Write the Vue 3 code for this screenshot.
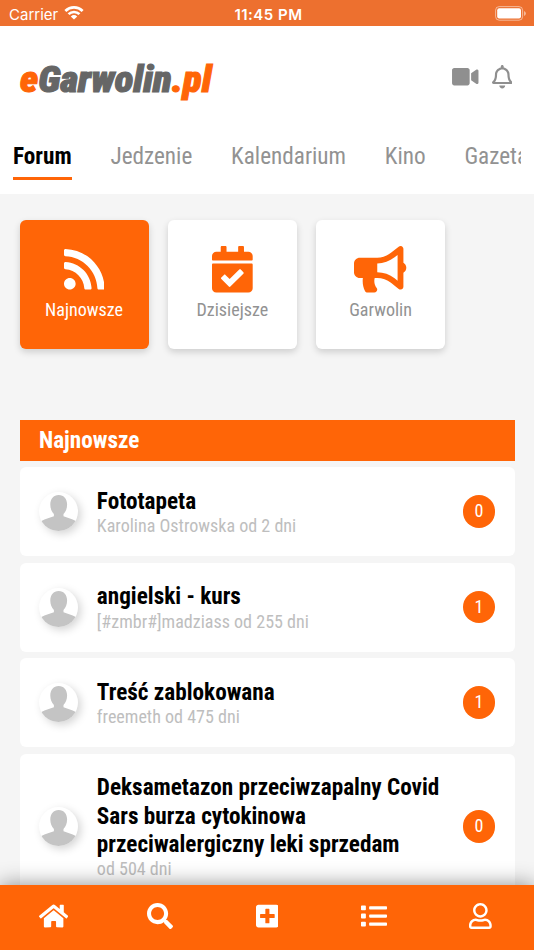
<template>
  <div class="app">

    <!-- ══ STATUS BAR ══ -->
    <div class="status-bar">
      <div class="carrier">
        <span>Carrier</span>
        <svg class="wifi" viewBox="0 0 20 15">
          <path d="M.4 4.900a14 14 0 0 1 19.200 0l-1.900 2a11.200 11.200 0 0 0-15.400 0z" />
          <path d="M3.600 8.200a9.300 9.300 0 0 1 12.800 0l-1.900 1.900a6.600 6.600 0 0 0-9 0z" />
          <path d="M6.800 11.400a4.700 4.700 0 0 1 6.400 0L10 14.600z" />
        </svg>
      </div>
      <div class="clock">11:45 PM</div>
      <div class="battery-wrap">
        <svg class="battery" viewBox="0 0 32 15">
          <rect x="0.6" y="0.6" width="27" height="13.6" rx="3.6" class="battery-shell" />
          <rect x="2.2" y="2.2" width="23.8" height="10.4" rx="2" />
          <path d="M29 5v5a2.600 2.600 0 0 0 0-5z" class="battery-tip" />
        </svg>
      </div>
    </div>

    <!-- ══ HEADER ══ -->
    <header class="header">
      <div class="brand-row">
        <svg class="logo" viewBox="0 0 210 60">
          <text x="1" y="41.500" textLength="191.500" lengthAdjust="spacingAndGlyphs" class="logo-text"><tspan class="accent">e</tspan>Garwolin<tspan class="accent">.pl</tspan></text>
        </svg>
        <div class="actions">
          <svg class="icon-video" viewBox="0 0 576 512"><path :d="icons.video" /></svg>
          <svg class="icon-bell" viewBox="0 0 448 512"><path :d="icons.bell" /></svg>
        </div>
      </div>
      <nav class="tabs">
        <a v-for="(tab, i) in tabs" :key="tab" class="tab" :class="{ active: i === 0 }">{{ tab }}</a>
      </nav>
    </header>

    <!-- ══ CONTENT ══ -->
    <main class="content">
      <div class="tiles">
        <div v-for="(tile, i) in tiles" :key="tile.label" class="tile" :class="{ active: i === 0 }">
          <svg class="tile-icon" :viewBox="`0 0 ${tile.width} 512`"><path :d="icons[tile.icon]" /></svg>
          <span class="tile-label">{{ tile.label }}</span>
        </div>
      </div>

      <h2 class="section-title">Najnowsze</h2>

      <div class="topics">
        <article v-for="topic in topics" :key="topic.title" class="topic">
          <div class="avatar">
            <svg viewBox="0 0 39 39">
              <path d="M19.700 3C14.500 3 11.300 7 11.300 12.500c0 4 1.300 7 3.600 9.500v2.200L9 26.200c-2.500.7-4.700 1.600-6.600 2.700L3 31a20 20 0 0 0 33 0l.8-2.100c-1.900-1.100-4.100-2-6.600-2.700l-5.700-2V22c2.300-2.500 3.600-5.500 3.600-9.500C28.100 7 24.900 3 19.700 3z" />
            </svg>
          </div>
          <div class="topic-body">
            <h3 class="topic-title">{{ topic.title }}</h3>
            <div class="topic-meta">{{ topic.meta }}</div>
          </div>
          <span class="count">{{ topic.count }}</span>
        </article>
      </div>
    </main>

    <!-- ══ BOTTOM BAR ══ -->
    <footer class="bottom-bar">
      <a v-for="item in menu" :key="item.icon" class="menu-item">
        <svg class="menu-icon" :viewBox="`0 0 ${item.width} 512`"><path :d="icons[item.icon]" /></svg>
      </a>
    </footer>
  </div>
</template>

<script setup>
const tabs = ['Forum', 'Jedzenie', 'Kalendarium', 'Kino', 'Gazeta']

const tiles = [
  { label: 'Najnowsze', icon: 'rss', width: 448 },
  { label: 'Dzisiejsze', icon: 'calendar', width: 448 },
  { label: 'Garwolin', icon: 'bullhorn', width: 576 },
]

const topics = [
  { title: 'Fototapeta', meta: 'Karolina Ostrowska od 2 dni', count: 0 },
  { title: 'angielski - kurs', meta: '[#zmbr#]madziass od 255 dni', count: 1 },
  { title: 'Treść zablokowana', meta: 'freemeth od 475 dni', count: 1 },
  { title: 'Deksametazon przeciwzapalny Covid Sars burza cytokinowa przeciwalergiczny leki sprzedam', meta: 'od 504 dni', count: 0 },
]

const menu = [
  { icon: 'home', width: 576 },
  { icon: 'search', width: 512 },
  { icon: 'plus', width: 448 },
  { icon: 'list', width: 512 },
  { icon: 'user', width: 448 },
]

const icons = {
  video: 'M336.2 64H47.8C21.4 64 0 85.4 0 111.8v288.4C0 426.6 21.4 448 47.8 448h288.4c26.4 0 47.8-21.4 47.8-47.8V111.8c0-26.4-21.4-47.8-47.8-47.8zm189.4 37.7L416 177.3v157.4l109.6 75.5c21.2 14.6 50.4-.3 50.4-25.7V127.4c0-25.4-29.1-40.4-50.4-25.8z',
  bell: 'M439.39 362.29c-19.32-20.76-55.47-51.99-55.47-154.29 0-77.7-54.48-139.9-127.94-155.16V32c0-17.67-14.32-32-31.98-32s-31.98 14.33-31.98 32v20.84C118.56 68.1 64.08 130.3 64.08 208c0 102.3-36.15 133.53-55.47 154.29-6 6.45-8.66 14.16-8.61 21.71.11 16.4 12.98 32 32.1 32h383.8c19.12 0 32-15.6 32.1-32 .05-7.55-2.61-15.27-8.61-21.71zM67.53 368c21.22-27.97 44.42-74.33 44.53-159.42 0-.2-.06-.38-.06-.58 0-61.86 50.14-112 112-112s112 50.14 112 112c0 .2-.06.38-.06.58.11 85.1 23.31 131.46 44.53 159.42H67.53zM224 512c35.32 0 63.97-28.65 63.97-64H160.03c0 35.35 28.65 64 63.97 64z',
  rss: 'M128.081 415.959c0 35.369-28.672 64.041-64.041 64.041S0 451.328 0 415.959s28.672-64.041 64.041-64.041 64.04 28.673 64.04 64.041zm175.66 47.25c-8.354-154.6-132.185-278.587-286.95-286.95C7.656 175.765 0 183.105 0 192.253v48.069c0 8.415 6.49 15.472 14.887 16.018 111.832 7.284 201.473 96.702 208.772 208.772.547 8.397 7.604 14.887 16.018 14.887h48.069c9.149.001 16.489-7.655 15.995-16.79zm144.249.288C439.596 229.677 251.465 40.445 16.503 32.01 7.473 31.686 0 38.981 0 48.016v48.068c0 8.625 6.835 15.645 15.453 15.999 191.179 7.839 344.627 161.316 352.465 352.465.353 8.618 7.373 15.453 15.999 15.453h48.068c9.034-.001 16.329-7.474 16.005-16.504z',
  calendar: 'M436 160H12c-6.627 0-12-5.373-12-12v-36c0-26.51 21.49-48 48-48h48V12c0-6.627 5.373-12 12-12h40c6.627 0 12 5.373 12 12v52h128V12c0-6.627 5.373-12 12-12h40c6.627 0 12 5.373 12 12v52h48c26.51 0 48 21.49 48 48v36c0 6.627-5.373 12-12 12zM12 192h424c6.627 0 12 5.373 12 12v260c0 26.51-21.49 48-48 48H48c-26.51 0-48-21.49-48-48V204c0-6.627 5.373-12 12-12zm333.296 95.947l-28.169-28.398c-4.667-4.705-12.265-4.736-16.97-.068L194.12 364.665l-45.98-46.352c-4.667-4.705-12.266-4.736-16.971-.068l-28.397 28.17c-4.705 4.667-4.736 12.265-.068 16.97l82.601 83.269c4.667 4.705 12.265 4.736 16.97.068l142.953-141.805c4.705-4.667 4.736-12.265.068-16.97z',
  bullhorn: 'M576 240c0-23.63-12.95-44.04-32-55.12V32.01C544 23.26 537.02 0 512 0c-7.12 0-14.19 2.38-19.98 7.02l-85.03 68.03C364.28 109.19 310.66 128 256 128H64c-35.35 0-64 28.65-64 64v96c0 35.35 28.65 64 64 64h33.7c-1.39 10.48-2.18 21.14-2.18 32 0 39.77 9.26 77.35 25.56 110.94 5.19 10.69 16.52 17.06 28.4 17.06h74.28c26.05 0 41.69-29.84 25.9-50.56-16.4-21.52-26.15-48.36-26.15-77.44 0-11.11 1.62-21.79 4.41-32H256c54.66 0 108.28 18.81 150.98 52.95l85.03 68.03a32.023 32.023 0 0 0 19.98 7.02c24.92 0 32-22.78 32-32V295.13C563.05 284.04 576 263.63 576 240zm-96 141.42l-33.05-26.44C392.95 311.78 325.12 288 256 288v-96c69.12 0 136.95-23.78 190.95-66.98L480 98.58v282.84z',
  home: 'M280.37 148.26L96 300.11V464a16 16 0 0 0 16 16l112.06-.29a16 16 0 0 0 15.92-16V368a16 16 0 0 1 16-16h64a16 16 0 0 1 16 16v95.64a16 16 0 0 0 16 16.05L464 480a16 16 0 0 0 16-16V300L295.67 148.26a12.19 12.19 0 0 0-15.3 0zM571.6 251.47L488 182.56V44.05a12 12 0 0 0-12-12h-56a12 12 0 0 0-12 12v72.61L318.47 43a48 48 0 0 0-61 0L4.34 251.47a12 12 0 0 0-1.6 16.9l25.5 31A12 12 0 0 0 45.15 301l235.22-193.74a12.19 12.19 0 0 1 15.3 0L530.9 301a12 12 0 0 0 16.9-1.6l25.5-31a12 12 0 0 0-1.7-16.93z',
  search: 'M505 442.7L405.3 343c-4.5-4.5-10.6-7-17-7H372c27.6-35.3 44-79.7 44-128C416 93.1 322.9 0 208 0S0 93.1 0 208s93.1 208 208 208c48.3 0 92.7-16.4 128-44v16.3c0 6.4 2.5 12.5 7 17l99.7 99.7c9.4 9.4 24.6 9.4 33.9 0l28.3-28.3c9.4-9.4 9.4-24.6.1-34zM208 336c-70.7 0-128-57.2-128-128 0-70.7 57.2-128 128-128 70.7 0 128 57.2 128 128 0 70.7-57.2 128-128 128z',
  plus: 'M400 32H48C21.5 32 0 53.5 0 80v352c0 26.5 21.5 48 48 48h352c26.5 0 48-21.5 48-48V80c0-26.5-21.5-48-48-48zm-32 252c0 6.6-5.4 12-12 12h-92v92c0 6.6-5.4 12-12 12h-56c-6.6 0-12-5.4-12-12v-92H92c-6.6 0-12-5.4-12-12v-56c0-6.6 5.4-12 12-12h92v-92c0-6.6 5.4-12 12-12h56c6.6 0 12 5.4 12 12v92h92c6.6 0 12 5.4 12 12v56z',
  list: 'M80 368H16a16 16 0 0 0-16 16v64a16 16 0 0 0 16 16h64a16 16 0 0 0 16-16v-64a16 16 0 0 0-16-16zm0-320H16A16 16 0 0 0 0 64v64a16 16 0 0 0 16 16h64a16 16 0 0 0 16-16V64a16 16 0 0 0-16-16zm0 160H16a16 16 0 0 0-16 16v64a16 16 0 0 0 16 16h64a16 16 0 0 0 16-16v-64a16 16 0 0 0-16-16zm416 176H176a16 16 0 0 0-16 16v32a16 16 0 0 0 16 16h320a16 16 0 0 0 16-16v-32a16 16 0 0 0-16-16zm0-320H176a16 16 0 0 0-16 16v32a16 16 0 0 0 16 16h320a16 16 0 0 0 16-16V80a16 16 0 0 0-16-16zm0 160H176a16 16 0 0 0-16 16v32a16 16 0 0 0 16 16h320a16 16 0 0 0 16-16v-32a16 16 0 0 0-16-16z',
  user: 'M313.6 304c-28.7 0-42.5 16-89.6 16-47.1 0-60.8-16-89.6-16C60.2 304 0 364.2 0 438.4V464c0 26.5 21.5 48 48 48h352c26.5 0 48-21.5 48-48v-25.6c0-74.2-60.2-134.4-134.4-134.4zM400 464H48v-25.6c0-47.6 38.8-86.4 86.4-86.4 14.6 0 38.3 16 89.6 16 51.7 0 74.9-16 89.6-16 47.6 0 86.4 38.8 86.4 86.4V464zM224 288c79.5 0 144-64.5 144-144S303.5 0 224 0 80 64.5 80 144s64.5 144 144 144zm0-240c52.9 0 96 43.1 96 96s-43.1 96-96 96-96-43.1-96-96 43.1-96 96-96z',
}
</script>

<style>
body { margin: 0; overflow: hidden; }
</style>

<style scoped>
.app {
  --theme: #ff6507;
  width: 534px;
  height: 950px;
  display: flex;
  flex-direction: column;
  overflow: hidden;
  background: #f5f5f5;
  font-family: 'Roboto Condensed', Roboto, sans-serif;
  font-stretch: 75%;
}
svg { display: block; fill: currentColor; }

/* STATUS BAR */
.status-bar {
  height: 26px;
  flex: none;
  box-sizing: border-box;
  display: grid;
  grid-template-columns: 1fr auto 1fr;
  align-items: center;
  padding: 2px 7px 0 9px;
  background: #ed702f;
  color: #fff;
  font-family: Inter, sans-serif;
  font-stretch: 100%;
  font-size: 15px;
}
.carrier { display: flex; align-items: center; gap: 6px; }
.wifi { width: 20px; height: 15px; margin-top: -3px; }
.clock { font-weight: 600; font-size: 15px; letter-spacing: .5px; margin-right: -1px; }
.battery-wrap { display: flex; justify-content: flex-end; }
.battery { width: 32px; height: 15px; margin-top: -1px; }
.battery-shell { fill: none; stroke: #fff; stroke-opacity: .5; }
.battery-tip { opacity: .5; }

/* HEADER */
.header {
  height: 168px;
  flex: none;
  background: #fff;
}
.brand-row {
  height: 102px;
  display: flex;
  align-items: center;
  justify-content: space-between;
  padding: 0 22px 0 19px;
}
.logo { width: 210px; height: 60px; margin-top: 6px; }
.logo-text {
  font-family: Roboto, sans-serif;
  font-stretch: 75%;
  font-size: 36.5px;
  font-weight: 900;
  font-style: italic;
  fill: #666;
  stroke: #666;
  stroke-width: 1.1px;
}
.accent { fill: var(--theme); stroke: var(--theme); }
.actions { display: flex; align-items: center; gap: 13px; color: #8f8f8f; }
.icon-video { width: 26.5px; height: 23.5px; }
.icon-bell { width: 20.5px; height: 23.5px; }

/* TABS */
.tabs {
  margin: 0 13px;
  height: 66px;
  display: flex;
  gap: 38.8px;
  overflow: hidden;
}
.tab {
  height: 49px;
  flex: none;
  line-height: 56px;
  font-size: 23.2px;
  color: #929292;
}
.tab.active {
  font-weight: 700;
  color: #000;
  border-bottom: 3px solid var(--theme);
}

/* TILES */
.content {
  flex: 1;
  min-height: 0;
  padding: 25.5px 19.5px 0;
  overflow: hidden;
}
.tiles { display: flex; gap: 19.3px; }
.tile {
  width: 129px;
  height: 129px;
  box-sizing: border-box;
  padding-top: 26.5px;
  display: flex;
  flex-direction: column;
  align-items: center;
  border-radius: 6px;
  background: #fff;
  color: var(--theme);
  box-shadow: 0 3px 7px rgba(0, 0, 0, .16);
}
.tile-icon { height: 46.5px; }
.tile-label { margin-top: 6.3px; font-size: 18.06px; line-height: 22px; color: #929292; }
.tile.active { background: var(--theme); color: #fff; }
.tile.active .tile-label { color: #fff; }

/* TOPICS */
.section-title {
  margin: 71px 0 6px;
  padding-left: 19.5px;
  height: 41.5px;
  line-height: 41.5px;
  font-size: 23.2px;
  font-weight: 700;
  background: var(--theme);
  color: #fff;
}
.topics { display: flex; flex-direction: column; gap: 6.45px; }
.topic {
  display: flex;
  align-items: center;
  padding: 19.6px 19.35px;
  border-radius: 6px;
  background: #fff;
}
.avatar {
  width: 39px;
  height: 39px;
  flex: none;
  border-radius: 50%;
  background: #fff;
  color: #c4c4c4;
  box-shadow: 3px 3px 8px rgba(0, 0, 0, .17);
  overflow: hidden;
}
.topic-body { flex: 1; min-width: 0; padding: 0 19px; }
.topic-title { margin: 0; font-size: 23.2px; font-weight: 700; line-height: 28.4px; color: #000; }
.topic-meta { font-size: 18.06px; line-height: 21.5px; color: #bebebe; }
.count {
  width: 32.5px;
  height: 32.5px;
  flex: none;
  border-radius: 50%;
  background: var(--theme);
  color: #fff;
  font-size: 18.06px;
  line-height: 32.5px;
  text-align: center;
}

/* BOTTOM BAR */
.bottom-bar {
  height: 65px;
  flex: none;
  box-sizing: border-box;
  padding-bottom: 4px;
  display: flex;
  align-items: center;
  position: relative;
  background: var(--theme);
  color: #fff;
  box-shadow: 0 0 20px rgba(0, 0, 0, .45);
}
.menu-item { flex: 1; display: flex; justify-content: center; }
.menu-icon { height: 26px; }
</style>
